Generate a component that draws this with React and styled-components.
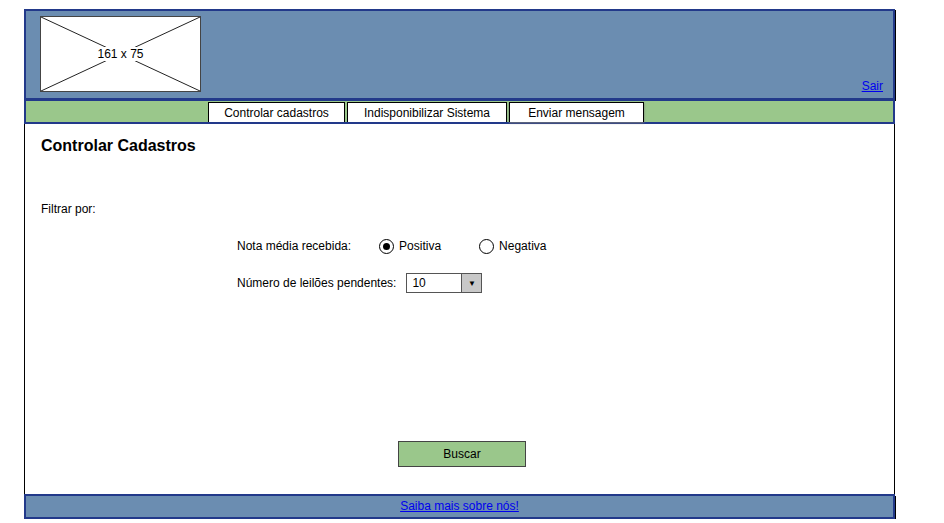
import React from 'react';
import styled, { createGlobalStyle } from 'styled-components';

const GlobalStyle = createGlobalStyle`
  body {
    margin: 0;
    background: #ffffff;
    font-family: "Liberation Sans", Arial, sans-serif;
    color: #000;
  }
`;

const Page = styled.div`
  margin: 9px 0 0 24px;
  width: 871px;
  display: flex;
  flex-direction: column;
`;

const Header = styled.header`
  box-sizing: border-box;
  height: 91px;
  background-color: #6b8db1;
  border: 2px solid #22398a;
  box-shadow: 1px 1px 0 #000;
  display: flex;
  justify-content: space-between;
  align-items: flex-end;
  padding: 5px 10px 5px 14px;
`;

const Placeholder = styled.div`
  align-self: flex-start;
  width: 161px;
  height: 76px;
  position: relative;
  box-sizing: border-box;
  border: 1px solid #444;
  background: #fff;
  display: flex;
  align-items: center;
  justify-content: center;
  font-size: 12px;
  svg {
    position: absolute;
    inset: 0;
  }
  span {
    position: relative;
    background: #fff;
    padding: 0 1px;
  }
`;

const Link = styled.a`
  color: #0000ee;
  text-decoration: underline;
  font-size: 12px;
  cursor: pointer;
`;

const Nav = styled.nav`
  box-sizing: border-box;
  height: 24px;
  background-color: #9ac78b;
  border: 2px solid #22398a;
  border-top-width: 1px;
  display: flex;
  align-items: flex-end;
  gap: 2px;
  padding-left: 182px;
`;

const Tab = styled.div`
  box-sizing: border-box;
  width: ${(p) => p.$w}px;
  height: 20px;
  background: #fff;
  border: 1px solid #000;
  border-bottom: none;
  font-size: 12px;
  display: flex;
  align-items: center;
  justify-content: center;
  ${(p) => p.$active && 'box-shadow: 0 1px 2px #777;'}
`;

const Content = styled.main`
  box-sizing: border-box;
  height: 370px;
  border-left: 1px solid #000;
  border-right: 1px solid #000;
  padding: 13px 0 0 16px;
  display: flex;
  flex-direction: column;
`;

const Title = styled.h1`
  margin: 0;
  font-size: 16px;
  font-weight: bold;
  line-height: 18px;
`;

const Label = styled.div`
  margin-top: ${(p) => p.$mt}px;
  font-size: 12px;
  line-height: 14px;
`;

const FilterBlock = styled.div`
  margin: 21px 0 0 196px;
  display: flex;
  flex-direction: column;
  gap: 19px;
`;

const Row = styled.div`
  display: flex;
  align-items: center;
  font-size: 12px;
  height: 18px;
`;

const RadioGroup = styled.div`
  display: flex;
  align-items: center;
  margin-left: ${(p) => p.$ml}px;
  gap: 5px;
`;

const Radio = styled.span`
  box-sizing: border-box;
  width: 15px;
  height: 15px;
  border-radius: 50%;
  border: 1px solid #000;
  display: flex;
  align-items: center;
  justify-content: center;
  &::after {
    content: '';
    width: 7px;
    height: 7px;
    border-radius: 50%;
    background: ${(p) => (p.$checked ? '#000' : 'transparent')};
  }
`;

const Select = styled.div`
  margin-left: 10px;
  box-sizing: border-box;
  width: 76px;
  height: 20px;
  border: 1px solid #555;
  display: flex;
  background: #fff;
`;

const SelectValue = styled.span`
  flex: 1;
  padding-left: 5px;
  display: flex;
  align-items: center;
`;

const SelectArrow = styled.span`
  width: 19px;
  background: #c8c8c8;
  border-left: 1px solid #555;
  display: flex;
  align-items: center;
  justify-content: center;
  font-size: 8px;
`;

const Spacer = styled.div`
  flex: 1;
`;

const Button = styled.button`
  align-self: flex-start;
  margin: 0 0 27px 357px;
  width: 128px;
  height: 26px;
  background: #9ac78b;
  border: 1px solid #444;
  font-family: inherit;
  font-size: 12px;
  color: #000;
  padding: 0;
`;

const Footer = styled.footer`
  box-sizing: border-box;
  height: 25px;
  background-color: #6b8db1;
  border: 2px solid #22398a;
  box-shadow: 1px 2px 0 #000;
  display: flex;
  align-items: center;
  justify-content: center;
  padding-bottom: 1px;
`;

export default function App() {
  return (
    <>
      <GlobalStyle />
      <Page>
        <Header>
          <Placeholder>
            <svg width="159" height="74" viewBox="0 0 159 74">
              <line x1="0" y1="0" x2="159" y2="74" stroke="#222" strokeWidth="1" />
              <line x1="159" y1="0" x2="0" y2="74" stroke="#222" strokeWidth="1" />
            </svg>
            <span>161 x 75</span>
          </Placeholder>
          <Link>Sair</Link>
        </Header>
        <Nav>
          <Tab $w={137}>Controlar cadastros</Tab>
          <Tab $w={160}>Indisponibilizar Sistema</Tab>
          <Tab $w={135} $active>Enviar mensagem</Tab>
        </Nav>
        <Content>
          <Title>Controlar Cadastros</Title>
          <Label $mt={47}>Filtrar por:</Label>
          <FilterBlock>
            <Row>
              Nota média recebida:
              <RadioGroup $ml={28}>
                <Radio $checked />
                Positiva
              </RadioGroup>
              <RadioGroup $ml={38}>
                <Radio />
                Negativa
              </RadioGroup>
            </Row>
            <Row>
              Número de leilões pendentes:
              <Select>
                <SelectValue>10</SelectValue>
                <SelectArrow>▼</SelectArrow>
              </Select>
            </Row>
          </FilterBlock>
          <Spacer />
          <Button>Buscar</Button>
        </Content>
        <Footer>
          <Link>Saiba mais sobre nós!</Link>
        </Footer>
      </Page>
    </>
  );
}
